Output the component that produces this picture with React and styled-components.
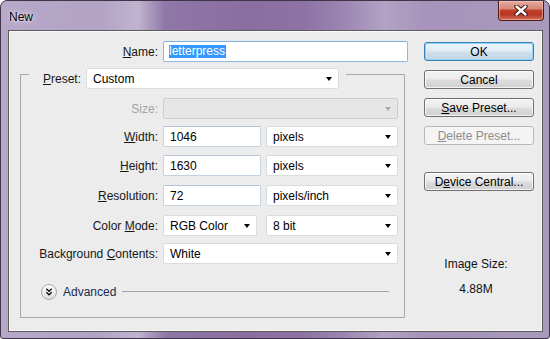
import React from 'react';
import styled, { createGlobalStyle, css } from 'styled-components';

const Global = createGlobalStyle`
  html, body { margin: 0; padding: 0; background: #ffffff; }
  body { font-family: "Liberation Sans", Arial, sans-serif; font-size: 12px; }
  #root { width: 550px; height: 339px; }
`;

const Window = styled.div`
  box-sizing: border-box;
  width: 550px;
  height: 339px;
  border: 1px solid #3e3548;
  border-radius: 7px 7px 3px 3px;
  background: linear-gradient(90deg, #b6a8c8 0%, #b2a3c5 18%, #c0b3cf 25%, #8f77a7 30%, #8a6e9f 45%, #8d72a3 55%, #9a84b0 62%, #b2a2c4 70%, #a692ba 78%, #a99abc 100%);
  padding: 0 6px 6px 7px;
  display: flex;
  flex-direction: column;
  overflow: hidden;
`;

const TitleBar = styled.div`
  height: 29px;
  flex: none;
  display: flex;
  align-items: flex-start;
  justify-content: space-between;
  padding-left: 1px;
`;

const Title = styled.div`
  align-self: center;
  margin-top: 2px;
  font-size: 12px;
  color: #000;
  text-shadow: 0 0 6px rgba(255, 255, 255, 0.9), 0 0 2px rgba(255, 255, 255, 0.8);
`;

const CloseButton = styled.div`
  box-sizing: border-box;
  width: 46px;
  height: 20px;
  margin-right: -1px;
  border: 1px solid #4e1a14;
  border-top: none;
  border-radius: 0 0 4px 4px;
  background: linear-gradient(#e7aaa0 0%, #d88878 40%, #c0402c 50%, #b83522 70%, #d0705a 100%);
  box-shadow: inset 0 0 0 1px rgba(255, 210, 200, 0.5);
  display: flex;
  align-items: center;
  justify-content: center;
`;

const Client = styled.div`
  flex: 1;
  display: flex;
  gap: 16px;
  border: 1px solid #5c5c5c;
  background: #ececec;
  box-shadow: inset 0 0 0 1px #f8f8f8;
  padding: 10px 8px 0 11px;
`;

const MainCol = styled.div`
  width: 388px;
  flex: none;
  display: flex;
  flex-direction: column;
`;

const SideCol = styled.div`
  width: 110px;
  flex: none;
  display: flex;
  flex-direction: column;
  gap: 9px;
  padding-top: 1px;
`;

const FormRow = styled.div`
  display: flex;
  align-items: center;
  gap: 5px;
  height: 21px;
  flex: none;
  margin-top: ${(p) => p.$mt || 0}px;
`;

const Label = styled.label`
  flex: none;
  width: ${(p) => (p.$w ? `${p.$w}px` : 'auto')};
  text-align: right;
  white-space: nowrap;
  font-size: 12px;
  color: ${(p) => (p.$disabled ? '#a4a4a4' : '#161616')};
`;

const TextField = styled.div`
  box-sizing: border-box;
  flex: none;
  width: ${(p) => p.$w}px;
  height: 21px;
  display: flex;
  align-items: center;
  padding-left: 6px;
  background: #ffffff;
  border: 1px solid ${(p) => (p.$focus ? '#8fb9e4' : '#c4d2e0')};
  border-top-color: ${(p) => (p.$focus ? '#7fb0e0' : '#b5c3d2')};
  border-radius: 2px;
  font-size: 12px;
  color: #000;
  white-space: nowrap;
`;

const Selected = styled.span`
  background: #3399ff;
  color: #ffffff;
  line-height: 13px;
  padding: 0 1px 0 0;
  margin-left: -1px;
`;

const Select = styled.div`
  box-sizing: border-box;
  flex: none;
  width: ${(p) => p.$w}px;
  height: 21px;
  margin-left: ${(p) => p.$ml || 0}px;
  display: flex;
  align-items: center;
  justify-content: space-between;
  padding: 0 6px 0 6px;
  background: ${(p) => (p.$disabled ? '#e6e6e6' : '#ffffff')};
  border: 1px solid ${(p) => (p.$disabled ? '#cdcdcd' : '#dcdcdc')};
  border-radius: 2px;
  font-size: 12px;
  color: #000;
  white-space: nowrap;
`;

const Arrow = styled.span`
  width: 0;
  height: 0;
  border-left: 3.5px solid transparent;
  border-right: 3.5px solid transparent;
  border-top: 4px solid ${(p) => (p.$disabled ? '#a9a9a9' : '#000')};
`;

const Group = styled.div`
  box-sizing: border-box;
  width: 385px;
  height: 244px;
  margin-top: 12px;
  border: 1px solid #a9a9a9;
  display: flex;
  flex-direction: column;
`;

const GroupHeader = styled.div`
  align-self: flex-start;
  display: flex;
  align-items: center;
  gap: 5px;
  height: 21px;
  margin: -7px 0 0 8px;
  padding: 0 7px 0 14px;
  background: #ececec;
`;

const AdvancedRow = styled.div`
  display: flex;
  align-items: center;
  height: 16px;
  margin-top: 20px;
  padding: 0 15px 0 20px;
  gap: 6px;
`;

const AdvancedText = styled.span`
  font-size: 12px;
  color: #1a2c52;
`;

const Rule = styled.div`
  flex: 1;
  height: 1px;
  background: #a3a3a3;
  margin-top: -1px;
`;

const Button = styled.div`
  box-sizing: border-box;
  width: 110px;
  height: 19px;
  flex: none;
  display: flex;
  align-items: center;
  justify-content: center;
  font-size: 12px;
  color: #000;
  border: 1px solid #707070;
  border-radius: 3px;
  background: linear-gradient(#f3f3f3 0%, #ebebeb 48%, #dddddd 52%, #cfcfcf 100%);
  box-shadow: inset 0 0 0 1px rgba(255, 255, 255, 0.75);
  margin-top: ${(p) => p.$mt || 0}px;
  ${(p) =>
    p.$default &&
    css`
      border-color: #3a7fb6;
      background: linear-gradient(#eaf4fb 0%, #e0ecf5 48%, #cfe0ec 52%, #c4d6e4 100%);
      box-shadow: inset 0 0 0 1px #8fd3f5;
    `}
  ${(p) =>
    p.$disabled &&
    css`
      border-color: #b5b9bc;
      background: #f4f4f4;
      color: #8d8d8d;
      box-shadow: none;
    `}
`;

const ImageInfo = styled.div`
  margin-top: 52px;
  padding-right: 6px;
  text-align: center;
  line-height: 25px;
  font-size: 12px;
  color: #111;
`;

const CloseIcon = () => (
  <svg width="14" height="11" viewBox="0 0 14 11">
    <path d="M2.5 1.5 L11.5 9.5 M11.5 1.5 L2.5 9.5" stroke="#3a1410" strokeWidth="4.4" strokeLinecap="round" />
    <path d="M2.5 1.5 L11.5 9.5 M11.5 1.5 L2.5 9.5" stroke="#ffffff" strokeWidth="2.4" strokeLinecap="round" />
  </svg>
);

const ExpandIcon = () => (
  <svg width="16" height="16" viewBox="0 0 16 16">
    <defs>
      <linearGradient id="eg" x1="0" y1="0" x2="0" y2="1">
        <stop offset="0" stopColor="#ffffff" />
        <stop offset="1" stopColor="#dcdcdc" />
      </linearGradient>
    </defs>
    <circle cx="8" cy="8" r="7.5" fill="url(#eg)" stroke="#a8a8a8" />
    <path d="M5.3 4.8 L8 7.3 L10.7 4.8 M5.3 8.3 L8 10.8 L10.7 8.3" fill="none" stroke="#111" strokeWidth="1.3" />
  </svg>
);

const rows = [
  { label: 'Width:', acc: 'W', rest: 'idth:', value: '1046', unit: 'pixels', mt: 7 },
  { label: 'Height:', acc: 'H', rest: 'eight:', value: '1630', unit: 'pixels', mt: 8 },
  { label: 'Resolution:', acc: 'R', rest: 'esolution:', value: '72', unit: 'pixels/inch', mt: 9 },
];

export default function App() {
  return (
    <>
      <Global />
      <Window>
        <TitleBar>
          <Title>New</Title>
          <CloseButton>
            <CloseIcon />
          </CloseButton>
        </TitleBar>
        <Client>
          <MainCol>
            <FormRow>
              <Label $w={138}>
                <u>N</u>ame:
              </Label>
              <TextField $w={245} $focus>
                <Selected>letterpress</Selected>
              </TextField>
            </FormRow>
            <Group>
              <GroupHeader>
                <Label>
                  <u>P</u>reset:
                </Label>
                <Select $w={253}>
                  Custom
                  <Arrow />
                </Select>
              </GroupHeader>
              <FormRow $mt={9}>
                <Label $w={137} $disabled>
                  Size:
                </Label>
                <Select $w={235} $disabled>
                  <span />
                  <Arrow $disabled />
                </Select>
              </FormRow>
              {rows.map((r) => (
                <FormRow key={r.label} $mt={r.mt}>
                  <Label $w={137}>
                    <u>{r.acc}</u>
                    {r.rest}
                  </Label>
                  <TextField $w={98}>{r.value}</TextField>
                  <Select $w={132}>
                    {r.unit}
                    <Arrow />
                  </Select>
                </FormRow>
              ))}
              <FormRow $mt={9}>
                <Label $w={137}>
                  Color <u>M</u>ode:
                </Label>
                <Select $w={94}>
                  RGB Color
                  <Arrow />
                </Select>
                <Select $w={132} $ml={4}>
                  8 bit
                  <Arrow />
                </Select>
              </FormRow>
              <FormRow $mt={7}>
                <Label $w={137}>
                  Background <u>C</u>ontents:
                </Label>
                <Select $w={235}>
                  White
                  <Arrow />
                </Select>
              </FormRow>
              <AdvancedRow>
                <ExpandIcon />
                <AdvancedText>Advanced</AdvancedText>
                <Rule />
              </AdvancedRow>
            </Group>
          </MainCol>
          <SideCol>
            <Button $default>OK</Button>
            <Button>Cancel</Button>
            <Button>
              <span>
                <u>S</u>ave Preset...
              </span>
            </Button>
            <Button $disabled>
              <span>
                <u>D</u>elete Preset...
              </span>
            </Button>
            <Button $mt={18}>
              <span>
                D<u>e</u>vice Central...
              </span>
            </Button>
            <ImageInfo>
              Image Size:
              <br />
              4.88M
            </ImageInfo>
          </SideCol>
        </Client>
      </Window>
    </>
  );
}
